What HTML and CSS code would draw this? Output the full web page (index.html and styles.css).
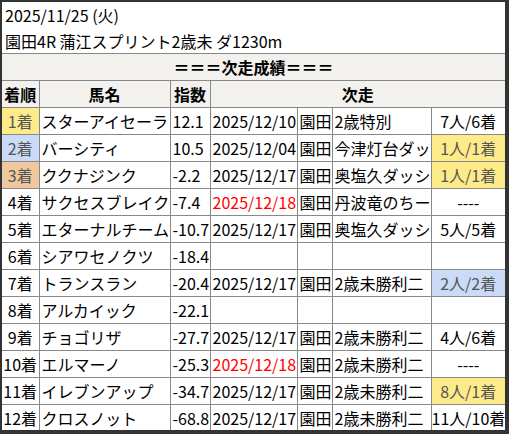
FILE: index.html
```html
<!DOCTYPE html>
<html lang="ja">
<head>
<meta charset="utf-8">
<link rel="stylesheet" href="styles.css">
</head>
<body>
<div class="frame">
  <div class="title">
    <div>2025/11/25 (火)</div>
    <div>園田4R 蒲江スプリント2歳未 ダ1230m</div>
  </div>
  <table class="results">
    <colgroup>
      <col class="c-rank"><col class="c-name"><col class="c-idx"><col class="c-date"><col class="c-venue"><col class="c-race"><col class="c-res">
    </colgroup>
    <thead>
      <tr><th colspan="7" class="banner">＝＝＝次走成績＝＝＝</th></tr>
      <tr><th>着順</th><th>馬名</th><th>指数</th><th colspan="4">次走</th></tr>
    </thead>
    <tbody>
      <tr><td class="rank gold">1着</td><td>スターアイセーラ</td><td>12.1</td><td>2025/12/10</td><td>園田</td><td>2歳特別</td><td class="res">7人/6着</td></tr>
      <tr><td class="rank silver">2着</td><td>バーシティ</td><td>10.5</td><td>2025/12/04</td><td>園田</td><td>今津灯台ダッ</td><td class="res gold">1人/1着</td></tr>
      <tr><td class="rank bronze">3着</td><td>ククナジンク</td><td>-2.2</td><td>2025/12/17</td><td>園田</td><td>奥塩久ダッシ</td><td class="res gold">1人/1着</td></tr>
      <tr><td class="rank">4着</td><td>サクセスブレイク</td><td>-7.4</td><td class="future">2025/12/18</td><td>園田</td><td>丹波竜のちー</td><td class="res">----</td></tr>
      <tr><td class="rank">5着</td><td>エターナルチーム</td><td>-10.7</td><td>2025/12/17</td><td>園田</td><td>奥塩久ダッシ</td><td class="res">5人/5着</td></tr>
      <tr><td class="rank">6着</td><td>シアワセノクツ</td><td>-18.4</td><td></td><td></td><td></td><td class="res"></td></tr>
      <tr><td class="rank">7着</td><td>トランスラン</td><td>-20.4</td><td>2025/12/17</td><td>園田</td><td>2歳未勝利二</td><td class="res silver">2人/2着</td></tr>
      <tr><td class="rank">8着</td><td>アルカイック</td><td>-22.1</td><td></td><td></td><td></td><td class="res"></td></tr>
      <tr><td class="rank">9着</td><td>チョゴリザ</td><td>-27.7</td><td>2025/12/17</td><td>園田</td><td>2歳未勝利二</td><td class="res">4人/6着</td></tr>
      <tr><td class="rank">10着</td><td>エルマーノ</td><td>-25.3</td><td class="future">2025/12/18</td><td>園田</td><td>2歳未勝利二</td><td class="res">----</td></tr>
      <tr><td class="rank">11着</td><td>イレブンアップ</td><td>-34.7</td><td>2025/12/17</td><td>園田</td><td>2歳未勝利二</td><td class="res gold">8人/1着</td></tr>
      <tr><td class="rank">12着</td><td>クロスノット</td><td>-68.8</td><td>2025/12/17</td><td>園田</td><td>2歳未勝利二</td><td class="res">11人/10着</td></tr>
    </tbody>
  </table>
</div>
</body>
</html>
```

FILE: styles.css
```css
html, body {
  margin: 0;
  padding: 0;
  background: #ffffff;
}
body {
  font-family: "Noto Sans CJK JP", "Noto Sans", sans-serif;
  font-size: 16px;
  color: #000;
}
.frame {
  width: 503px;
  height: 428px;
  border-style: solid;
  border-color: #333333;
  border-width: 2px 4px 4px 2px;
  background: #fff;
  overflow: hidden;
}
.title {
  height: 51px;
  border-bottom: 1px solid #888;
  padding: 0 3px;
  line-height: 26px;
  white-space: nowrap;
}
.results {
  width: 503px;
  table-layout: fixed;
  border-collapse: collapse;
  border-style: hidden;
}
.c-rank { width: 37px; }
.c-name { width: 131px; }
.c-idx { width: 40px; }
.c-date { width: 87px; }
.c-venue { width: 35px; }
.c-race { width: 99px; }
.c-res { width: 74px; }
.results th,
.results td {
  border: 1px solid #888;
  padding: 0 0 0 2px;
  height: 26px;
  line-height: 26px;
  white-space: nowrap;
  overflow: hidden;
  text-align: left;
}
.results th {
  background: #f2f1ed;
  font-weight: bold;
  text-align: center;
  padding: 0;
}
.results td.rank,
.results td.res {
  text-align: center;
  padding: 0;
}
.gold {
  background: #fdeb8a;
  color: #555;
}
.silver {
  background: #c9dbf7;
  color: #555;
}
.bronze {
  background: #f0c8a0;
  color: #555;
}
.future {
  color: #ff0000;
}
```
